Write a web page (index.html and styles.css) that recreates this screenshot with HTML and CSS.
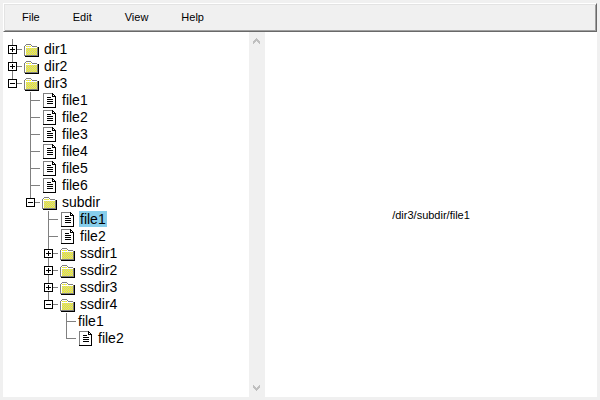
FILE: index.html
```html
<!DOCTYPE html>
<html lang="en">
<head>
    <meta charset="UTF-8">
    <meta name="viewport" content="width=device-width, initial-scale=1.0">
    <title>Directory Tree</title>
    <link rel="stylesheet" href="styles.css">
</head>
<body>
    <svg class="symbols" aria-hidden="true">
        <defs>
            <pattern id="dither" width="2" height="2" patternUnits="userSpaceOnUse">
                <rect width="2" height="2" fill="#c0c0c0"/>
                <rect width="1" height="1" fill="#ffff00"/>
                <rect x="1" y="1" width="1" height="1" fill="#ffff00"/>
            </pattern>
            <symbol id="folder" viewBox="0 0 16 13">
                <path fill="#808080" d="M2 0h5v1h1v1h5v1h1v9H0V2h1V1h1z"/>
                <path fill="#ffffff" d="M2 1h5v1h1v1h5v1H1V2h1z"/>
                <path fill="#ffffff" d="M1 3h1v8H1z"/>
                <path fill="url(#dither)" d="M2 2h5v1H2zM2 4h11v7H2z"/>
                <path fill="#000000" d="M14 3h1v10H1v-1h13z"/>
            </symbol>
            <symbol id="file" viewBox="0 0 14 15">
                <path fill="#808080" d="M0 0h10v1H1v13H0z"/>
                <path fill="#ffffff" d="M1 1h8v3h3v10H1z"/>
                <path fill="#000000" d="M9 0h1v1h1v1h1v1h1v12H0v-1h12V4H9z"/>
                <path fill="#ffffff" d="M10 2h1v1h-1z"/>
                <path fill="#000000" d="M4 4h4v1H4zM4 6h6v1H4zM4 8h6v1H4zM4 10h6v1H4z"/>
            </symbol>
        </defs>
    </svg>

    <header class="menubar">
        <button type="button">File</button>
        <button type="button">Edit</button>
        <button type="button">View</button>
        <button type="button">Help</button>
    </header>

    <main class="panes">
        <nav class="tree-pane" aria-label="Directories">
            <ul class="tree">
                <li>
                    <div class="row dir"><button type="button" class="toggle plus" aria-label="Expand dir1"></button><svg class="icon"><use href="#folder"/></svg><button type="button" class="name">dir1</button></div>
                </li>
                <li>
                    <div class="row dir"><button type="button" class="toggle plus" aria-label="Expand dir2"></button><svg class="icon"><use href="#folder"/></svg><button type="button" class="name">dir2</button></div>
                </li>
                <li>
                    <div class="row dir"><button type="button" class="toggle" aria-label="Collapse dir3"></button><svg class="icon"><use href="#folder"/></svg><button type="button" class="name">dir3</button></div>
                    <ul>
                        <li><div class="row file"><svg class="icon"><use href="#file"/></svg><button type="button" class="name">file1</button></div></li>
                        <li><div class="row file"><svg class="icon"><use href="#file"/></svg><button type="button" class="name">file2</button></div></li>
                        <li><div class="row file"><svg class="icon"><use href="#file"/></svg><button type="button" class="name">file3</button></div></li>
                        <li><div class="row file"><svg class="icon"><use href="#file"/></svg><button type="button" class="name">file4</button></div></li>
                        <li><div class="row file"><svg class="icon"><use href="#file"/></svg><button type="button" class="name">file5</button></div></li>
                        <li><div class="row file"><svg class="icon"><use href="#file"/></svg><button type="button" class="name">file6</button></div></li>
                        <li>
                            <div class="row dir"><button type="button" class="toggle" aria-label="Collapse subdir"></button><svg class="icon"><use href="#folder"/></svg><button type="button" class="name">subdir</button></div>
                            <ul>
                                <li><div class="row file"><svg class="icon"><use href="#file"/></svg><button type="button" class="name selected">file1</button></div></li>
                                <li><div class="row file"><svg class="icon"><use href="#file"/></svg><button type="button" class="name">file2</button></div></li>
                                <li><div class="row dir"><button type="button" class="toggle plus" aria-label="Expand ssdir1"></button><svg class="icon"><use href="#folder"/></svg><button type="button" class="name">ssdir1</button></div></li>
                                <li><div class="row dir"><button type="button" class="toggle plus" aria-label="Expand ssdir2"></button><svg class="icon"><use href="#folder"/></svg><button type="button" class="name">ssdir2</button></div></li>
                                <li><div class="row dir"><button type="button" class="toggle plus" aria-label="Expand ssdir3"></button><svg class="icon"><use href="#folder"/></svg><button type="button" class="name">ssdir3</button></div></li>
                                <li>
                                    <div class="row dir"><button type="button" class="toggle" aria-label="Collapse ssdir4"></button><svg class="icon"><use href="#folder"/></svg><button type="button" class="name">ssdir4</button></div>
                                    <ul>
                                        <li><div class="row plain"><button type="button" class="name">file1</button></div></li>
                                        <li><div class="row file"><svg class="icon"><use href="#file"/></svg><button type="button" class="name">file2</button></div></li>
                                    </ul>
                                </li>
                            </ul>
                        </li>
                    </ul>
                </li>
            </ul>
        </nav>

        <div class="scrollbar" aria-hidden="true">
            <svg class="arrow" viewBox="0 0 8 6"><path d="M3 0h1v1h1v1h1v1h1v3H6V5H5V4H4V3H3v1H2v1H1v1H0V3h1V2h1V1h1z"/></svg>
            <svg class="arrow" viewBox="0 0 8 6"><path d="M3 6h1V5h1V4h1V3h1V0H6v1H5v1H4v1H3V2H2V1H1V0H0v3h1v1h1v1h1z"/></svg>
        </div>

        <section class="content">
            <p id="path">/dir3/subdir/file1</p>
        </section>
    </main>

    <script>
        const path = document.getElementById('path');

        // Open or close a directory
        document.querySelectorAll('.toggle').forEach(function (toggle) {
            toggle.addEventListener('click', function () {
                const list = toggle.closest('li').querySelector('ul');
                toggle.classList.toggle('plus');
                if (list) {
                    list.hidden = !list.hidden;
                }
            });
        });

        // Select an item and show its full path
        document.querySelectorAll('.name').forEach(function (name) {
            name.addEventListener('click', function () {
                document.querySelector('.selected').classList.remove('selected');
                name.classList.add('selected');

                let full = '';
                let item = name.closest('li');
                while (item) {
                    full = '/' + item.querySelector('.name').textContent + full;
                    item = item.parentElement.closest('li');
                }
                path.textContent = full;
            });
        });
    </script>
</body>
</html>
```

FILE: styles.css
```css
* {
    margin: 0;
    padding: 0;
    box-sizing: border-box;
}

body {
    display: flex;
    flex-direction: column;
    min-height: 100vh;
    padding: 3px;
    background: #f0f0f0;
    color: black;
    font-family: "Liberation Sans", Arial, sans-serif;
    font-size: 14px;
}

button {
    border: none;
    background: none;
    color: inherit;
    font: inherit;
}

svg {
    shape-rendering: crispEdges;
}

.symbols {
    position: absolute;
    width: 0;
    height: 0;
}

.menubar {
    display: flex;
    gap: 1px;
    padding: 0 2px;
    border: 1px solid white;
    border-right-color: #696969;
    border-bottom-color: #696969;
    box-shadow: inset 1px 1px #e3e3e3, inset -1px -1px #a0a0a0;
}

.menubar button {
    padding: 0 16px;
    font-size: 11px;
    line-height: 27px;
}

.panes {
    flex: 1;
    display: grid;
    grid-template-columns: 246px 16px 1fr;
    background: white;
}

.tree-pane {
    padding: 7px 5px;
}

ul {
    list-style: none;
}

.tree ul {
    margin-left: 18px;
}

/* vertical line joining the siblings, it stops at the last one */
li {
    background: linear-gradient(#808080, #808080) 4px 0 / 1px 100% no-repeat;
}

li:last-child {
    background-size: 1px 9px;
}

.tree > li:first-child {
    padding-top: 2px;
}

.row {
    display: flex;
    align-items: center;
    height: 17px;
    background: linear-gradient(#808080, #808080) 4px 8px / 10px 1px no-repeat;
}

.file {
    padding-left: 17px;
}

.plain {
    padding-left: 15px;
}

.toggle {
    width: 9px;
    height: 9px;
    margin-right: 7px;
    border: 1px solid black;
    background: linear-gradient(black, black) center / 5px 1px no-repeat white;
}

.plus {
    background:
        linear-gradient(black, black) center / 5px 1px no-repeat,
        linear-gradient(black, black) center / 1px 5px no-repeat,
        white;
}

.dir .icon {
    width: 16px;
    height: 13px;
    margin-top: 2px;
    margin-right: 3px;
}

.file .icon {
    width: 14px;
    height: 15px;
    margin-right: 4px;
}

.name {
    align-self: flex-start;
    padding: 0 1px;
    line-height: 16px;
}

.selected {
    background: skyblue;
}

.scrollbar {
    display: flex;
    flex-direction: column;
    justify-content: space-between;
    align-items: center;
    padding: 6px 0;
    background: #f0f0f0;
}

.arrow {
    width: 8px;
    height: 6px;
    fill: #bfbfbf;
}

.content {
    display: flex;
    align-items: center;
    justify-content: center;
    font-size: 11px;
}
```
